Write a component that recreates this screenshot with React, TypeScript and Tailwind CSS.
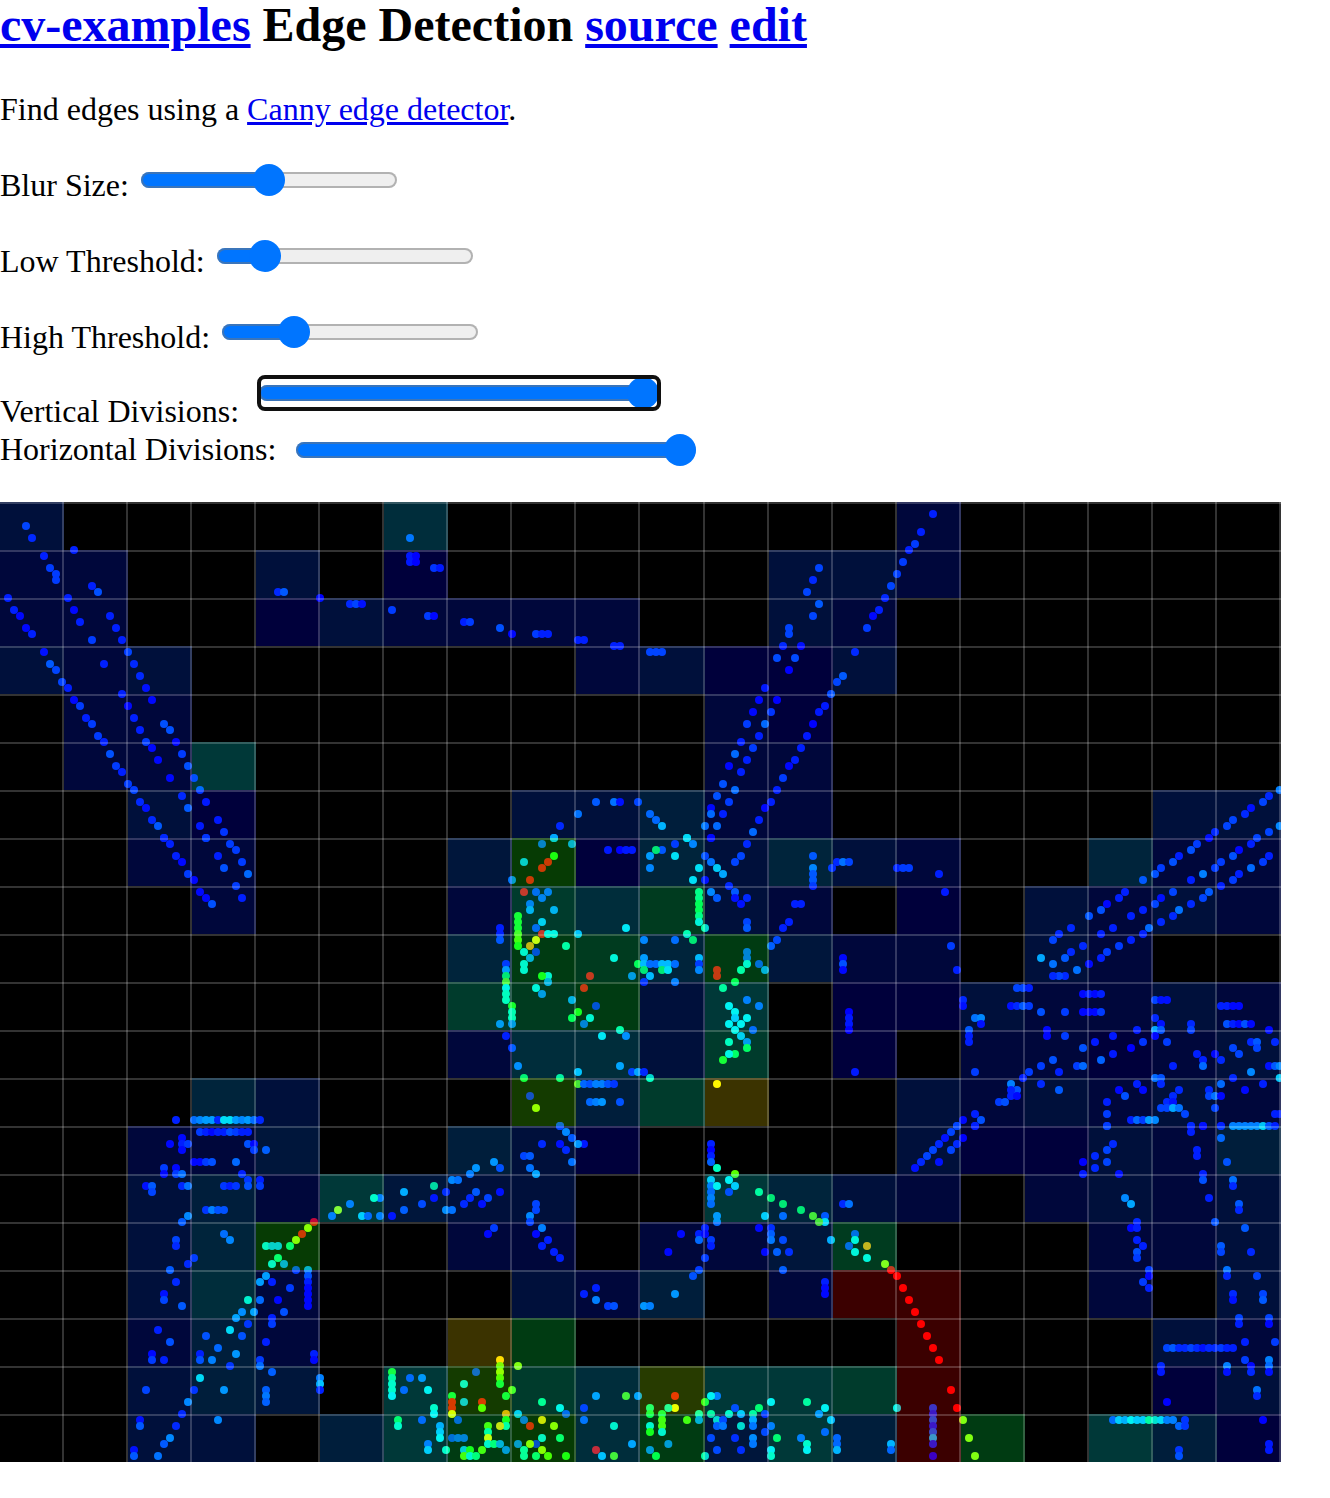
import { useState, type CSSProperties } from "react";

/* Cold-to-hot scale shared by the edge dots and the cell tints. */
const HEAT: Record<string, string> = {
  a: "#0000ff",
  b: "#0020ff",
  c: "#0044ff",
  d: "#0060ff",
  e: "#0080ff",
  f: "#009cff",
  g: "#00c4ff",
  h: "#00f4f4",
  i: "#00ffc0",
  j: "#00ff88",
  k: "#00ff4c",
  l: "#1cff10",
  m: "#58ff00",
  n: "#a8ff00",
  o: "#ffff00",
  s: "#ffdc00",
  p: "#ffa000",
  q: "#ff0000",
};

/* One letter per grid cell, 20 by 20; a dot leaves the cell untinted. */
const CELLS = [
  "c.....g.......b.....",
  "bb..c.a.....ccb.....",
  "bb..acbbbb..cb......",
  "cbc......bcaac......",
  ".bb........ba.......",
  ".bbh.......bb.......",
  "..ca....ccebb.....cc",
  "..bb...dlafcfcb..fbb",
  "...b...bigjcb.a.cbcb",
  ".......fkjfkdbb.cb..",
  ".......ijkch.aacbbcb",
  ".......bggci.a.bbabc",
  "...fc...meis..cbcbcb",
  "..bbd..eca....caacbe",
  "..cebhdcc..hfcb.bcbc",
  "..cfl..bb.bbdj...bbc",
  "..cgb...cbe.bqq..b.c",
  "..beb..sk.....q...cb",
  "..ced.hmignhhiq...ac",
  "..cc.ehklgkdheqk.hea",
];

/* Edge dots by tile; positions are in thirds of a canvas pixel from the tile's corner. */
const TILES = [
  {
    x: 0,
    y: 0,
    dots: `c78,72 b96,108 b132,162 c150,198 c168,216 c168,234 b222,144 b276,252 d294,270 b24,288 b42,324 a60,342
a78,378 b96,396 b204,288 a222,324 b240,360 b330,342 b348,378 b366,414 c276,414 b312,486 a132,450 d150,486
c168,504 c186,540 b204,558 a222,594 c240,612 b258,648 c276,666 c294,702 b312,720 d330,756 c348,792 b366,810
c384,846 c402,864 b420,900 a438,918 b456,954 d474,972 b492,1008 c384,450 b402,486 b420,522 a438,558 a456,594
b366,576 a384,612 b402,648 b420,684 c438,720 a456,738 a474,774 a510,828 b546,882 d564,918 d492,666 d510,684
a528,720 c546,756 d564,792 b582,828 c600,864 b618,900 b654,954 c672,990 b600,972 c618,1008 d1230,108
b1230,162 a1248,162 b1230,180 a1248,180 c1302,198 b1320,198 b834,270 d852,270 a960,288 b1050,306 c1068,306
a1086,306 c1176,324 c1284,342 a1302,342`,
  },
  {
    x: 448,
    y: 0,
    dots: `b48,360 c66,360 d156,378 a192,396 c264,396 b282,396 b300,396 b390,414 b408,414 b498,432 b516,432
c606,450 c624,450 c642,450 c1113,198 b1095,234 c1077,270 d1113,306 c1095,342 c1023,378 c1023,396 b1005,432
a1059,432 d987,468 d1041,468 a1023,504 b951,558 a933,594 a987,594 a915,630 c969,630 c897,666 e951,666 b933,702
b879,720 c915,738 e861,756 b897,774 a843,792 b879,810 d825,846 e861,864 d807,882 c843,900 a789,918 e789,936
b825,936 e771,972 e807,972 a789,1008 c1329,252 b1311,288 b1293,324 a1275,342 c1257,378 b1221,450 d1185,522
c1167,540 d1149,576 b1131,612 b1113,630 a1095,666 b1077,702 b1059,738 b1041,774 a1023,792 c1005,828 b987,864
b969,900 a951,918 b933,954 e915,990 d444,900 e498,900 a516,900 c570,900 e390,936 b336,972 d606,936 d624,954
g642,972 g318,1008 h717,1008`,
  },
  {
    x: 896,
    y: 0,
    dots: `b111,36 b75,90 c57,126 b39,144 c21,180 c3,216`,
  },
  {
    x: 0,
    y: 336,
    dots: `b492,0 b510,18 b528,54 a546,72 c564,108 a582,126 a600,162 a618,180 d636,198 c618,0 b654,54 d672,90
c690,18 c708,36 c726,72 e744,108 c708,144 b726,180`,
  },
  {
    x: 448,
    y: 288,
    dots: `g318,144 h717,144 a789,144 d282,162 f372,162 l318,198 g228,216 q300,216 q282,234 q246,270 e192,270
q228,306 e735,162 b681,162 c642,180 k624,180 f606,198 h681,198 e606,234 b480,180 a516,180 b534,180 b552,180
h753,234 h735,270 a771,270 c771,198 e789,216 h807,234 g825,252 b843,288 d861,306 a861,324 b897,324 a879,342
f789,306 d807,324 b897,162 c879,198 c861,216 c1095,198 e1095,234 c1095,252 c1095,270 b1095,288 b1041,342
b1059,342 b1023,396 b1005,414 c987,450 d969,468 c897,396 d897,414 j753,306 j753,324 k753,342 k753,360 j753,378
h753,396 i771,414 i717,432 k735,450 c264,306 d300,306 d282,324 d246,342 f246,360 f318,360 g282,396 c264,414
h534,414 l210,378 l210,396 l210,414 m210,432 m210,450 l210,468 b156,414 b156,432 c156,450 q282,432 h300,432
h318,432 g390,432 o264,450 p246,468 i354,468 h228,486 b264,486 f246,504 h228,522 h228,540 h300,558 l282,558
f300,576 h264,594 e282,612 h498,504 q426,558 q408,594 e552,558 f372,630 b444,648 l390,666 k372,684 h426,684
d408,702 i516,720 h462,738 e534,738 b174,522 f174,540 k174,558 m174,576 h174,594 i174,612 i174,630 l192,648
i192,666 i192,684 e192,702 e156,702 b174,738 c192,774 e210,828 k228,864 j336,864 g390,846 f516,828 b552,846
f570,846 b588,846 i606,864 e588,450 d681,450 f588,504 k570,522 g588,522 d606,522 d624,522 g642,522 g660,522
d681,522 k588,540 k642,540 h660,540 g606,558 b588,576 e681,576 g753,504 b753,522 e753,540 d897,486 d897,504
h897,522 c933,522 f951,540 i879,540 q807,540 q807,558 k861,576 j825,594 d897,630 d933,648 h843,648 h861,666
g861,684 h897,684 h843,702 h879,702 h861,720 c915,720 g879,738 e897,756 i843,756 k897,774 k861,792 h843,792
l825,810 m390,882 d408,882 c426,882 e444,882 e462,882 c480,882 b498,882 d426,936 e444,936 f462,936 c516,936
b246,918 n264,954 d336,1008 o807,882`,
  },
  {
    x: 832,
    y: 288,
    dots: `b15,216 e33,216 c51,216 b0,234 b195,234 c213,234 c231,234 b321,252 b339,306 c357,468 b375,540 a33,504
d33,522 a33,540 a51,666 b51,684 b51,702 a51,720 b69,846 e1343,0 b1311,18 c1293,36 a1257,54 b1239,72 c1203,90
c1185,108 b1149,126 a1131,144 c1095,162 d1077,180 b1041,198 d1023,216 c987,234 d969,252 c933,270 b879,306
b861,324 a825,342 d807,360 d771,378 b717,414 b681,432 c663,450 f1343,108 c1311,126 c1275,144 b1257,162
a1221,180 d1203,198 c1167,216 c1149,234 f1113,252 b1077,270 c1023,306 a987,324 c969,342 b933,360 b897,378
b843,414 b807,432 b753,468 b717,486 d699,504 e663,522 g627,504 b1311,198 c1293,216 e1257,234 b1221,252
c1203,270 b1167,288 d1131,306 c1113,324 b1077,342 e1041,360 b1023,378 b987,396 e951,414 b933,432 b897,450
c861,468 c825,486 b807,504 a771,522 e735,540 b699,558 c681,558 b663,558 c555,594 c573,594 b591,594 a537,648
b555,648 d573,648 c591,648 b393,630 a393,648 e429,684 f447,684 a447,702 d411,720 b411,738 b411,756 c429,846
d627,666 c699,666 a645,720 a645,738 c699,738 d753,774 d663,810 c627,828 c591,846 b573,864 b681,846 c735,828
e753,828 b789,756 b843,738 b843,792 e807,810 a897,774 c933,756 b915,720 a753,612 b771,612 a789,612 b807,612
a753,666 a771,666 a789,666 c807,666 c969,630 a987,630 a1005,630 b969,684 a987,702 g969,720 d987,720 b1077,702
c1077,720 a969,738 c1005,756 b1167,648 b1185,648 a1203,648 a1221,648 d1185,702 b1203,702 a1221,702 d1239,702
a1257,702 a1311,720 b1257,756 d1275,756 b1329,756 c1203,774 c1275,774 c1221,792 b1095,792 b1113,810 a1149,792
b1167,810 b1023,828 e1113,828 a1311,828 d1329,828 f1343,828 f1257,846 b1203,864 h1343,864 e969,864 d987,864
b627,882 d681,900 f537,882 d555,900 b537,900 b537,918 a555,918 c501,936 d519,936 b429,972 a393,990 d447,990
c375,1008 b429,1008 b987,882 b915,882 a861,900 a933,900 d879,918 b825,936 c825,972 b825,1008 b897,990 e915,990
c933,990 g951,990 f969,990 b1041,900 b1023,918 b1005,936 a1023,936 c987,954 c1005,954 g1023,954 e1041,954
c1059,972 e1167,882 b1131,900 c1131,918 e1149,918 a1167,918 c1149,954 a1239,900 b1293,882 b1329,972 b1343,972
b1077,1008 a1113,1008 a1167,1008`,
  },
  {
    x: 64,
    y: 576,
    dots: `b336,126 d390,126 e408,126 f426,126 f444,126 a462,126 h480,126 h498,126 f516,126 e534,126 f552,126
d570,126 b588,126 c408,162 b426,162 a444,162 b462,162 b480,162 d498,162 c516,162 b534,162 b552,162 a354,180
a318,198 b354,198 c372,198 a354,216 d552,198 a570,198 c570,216 d606,216 a390,252 a408,252 c426,252 d444,252
e516,252 c300,270 a336,270 a300,288 c336,288 e354,288 b534,288 b552,306 b588,306 a246,324 d264,324 b354,324
e372,324 b480,324 a498,324 b516,324 c552,324 c588,324 c264,342 b426,396 e444,396 c462,396 c480,396 f372,414
d354,432 c336,486 b336,504 d480,468 e498,486 b390,540 b372,558 d318,576 b336,612 a300,648 c300,666 d354,684
b282,756 d318,792 a264,828 c264,846 b300,846 d804,414 n822,396 d858,378 d948,360 i930,360 g894,414 c912,414
d948,414 a984,414 d1020,396 g1020,342 c1074,378 a1110,360 j1110,324 q750,432 n732,450 q714,468 n696,486
j678,504 h606,504 g624,504 g642,504 j642,540 h624,558 f660,558 c696,576 f732,576 d732,594 b732,612 a732,630
a732,648 a732,666 a732,684 g606,594 g588,612 b624,612 c678,630 i552,666 e588,666 a642,666 e534,702 f570,702
d660,702 f516,720 b624,720 c624,738 b552,738 h498,756 c426,774 c534,774 d462,810 b606,792 a408,828 c408,846
e444,846 f516,828 b498,864 c588,846 e588,864 b750,828 a750,846 h408,900 d624,882 b390,936 f480,936 f372,972
b354,1008 c246,936 d606,936 e606,954 d606,972 e768,900 g768,918 b768,936 a228,1026 d228,1044 f462,1026
b336,1044 f318,1080 d300,1098 a210,1116 d210,1134 e282,1134`,
  },
  {
    x: 384,
    y: 624,
    dots: `c528,0 f546,18 d564,36 b600,54 g582,54 b474,54 a528,54 b546,72 c420,90 d438,90 e564,108 e438,126
g456,144 f330,108 f276,126 e258,144 c348,126 f204,162 e222,162 d276,198 a348,198 b186,198 b258,216 c312,216
b240,234 a294,234 f186,252 e204,252 c456,234 c456,252 f438,270 c438,288 f474,306 a456,324 b492,342 b474,360
b510,378 b528,396 a312,324 c330,306 b600,504 b636,486 f636,522 c672,540 d690,540 s348,702 m348,720 n348,738
m348,756 k348,774 n402,720 c276,738 h240,774 g240,828 k204,810 q204,828 q204,846 o204,864 q294,828 m294,846
k366,810 m384,792 p366,864 c222,882 l366,882 i366,900 s348,900 m312,900 i312,918 o312,936 h312,954 c204,936
d222,936 d240,936 j330,954 f348,954 e366,972 g240,972 l258,972 m294,972 m240,990 h258,990 j276,990 l24,738
j24,756 i24,774 i24,792 h24,810 c78,756 e114,756 c60,792 h132,792 i150,846 h150,864 k42,882 i42,900 c114,882
f168,900 g168,918 h168,936 d132,954 g132,972 i186,972 g402,864 d420,882 s474,882 q438,900 n510,900 j474,828
h528,846 c546,864 h474,936 j528,936 e402,954 b456,954 n438,954 n474,972 i420,972 i420,990 j456,990 m492,990
l546,990 f636,810 m726,810 f762,810 b600,846 d600,882 i690,900 q636,972 f744,954 g654,990 m690,990 q873,810
o873,846 i853,846 j798,846 k798,864 h798,900 l798,918 k834,864 m834,882 m834,900 h834,918 m909,882 e853,954
e798,972 k816,990`,
  },
  {
    x: 640,
    y: 624,
    dots: `b213,54 a213,72 b213,90 d213,108 i231,126 m285,144 h267,162 g213,162 d213,180 h231,180 g285,180
c213,198 d213,216 c213,234 b267,198 e231,270 e231,288 j357,198 k393,216 k429,234 k483,252 m519,270 c555,270
h555,288 m537,288 g375,270 d429,270 b195,306 b177,324 a195,324 e177,342 c213,342 b213,360 c195,396 c177,432
c159,450 a123,324 a85,378 f105,504 f12,540 e30,540 a357,306 b393,306 d393,324 e393,342 c429,342 a375,378
d411,378 b447,378 d429,432 g573,342 b609,234 e627,234 c645,324 h645,342 c627,360 p681,360 h645,378 h681,396
n735,414 q753,432 q771,450 q789,486 q807,522 q825,558 q843,594 q861,630 q879,666 q897,702 q933,792 q951,846
b555,468 a555,486 a555,504 l195,828 d231,810 h213,810 i177,864 f177,882 j213,864 i231,882 c249,882 b285,846
i267,864 g303,864 i303,900 k357,846 j339,864 b375,864 g339,882 e339,900 d231,900 e249,900 c375,918 d393,900
c213,936 b285,936 f339,936 e339,954 k411,936 c231,972 b303,972 h393,972 i393,990 i195,990 h393,828 j501,828
h555,846 e537,864 g573,882 c555,918 d483,936 i501,954 h501,972 d591,936 d591,954 g591,972 g753,954 d753,972
h771,846 c879,846 b879,864 d879,882 b879,900 d879,918 g879,936 b879,954 a879,990`,
  },
  {
    x: 896,
    y: 624,
    dots: `c183,0 b237,0 c165,18 a147,36 a201,36 b129,54 b183,54 c111,72 c165,72 c93,90 b75,108 a57,126 a129,108
c633,0 b651,54 c633,72 b597,90 a561,108 c633,108 b597,126 b561,144 a669,144 f687,216 g705,234 b723,288
a705,306 b723,306 b723,342 b741,360 d723,378 c723,396 c759,432 a759,450 c741,468 b759,486 b885,0 b885,18
a921,0 b903,72 b903,90 b921,144 d921,162 b939,216 d957,288 b975,0 d975,36 c993,108 e1011,162 b1011,180
d1029,234 b1029,252 d1047,306 d975,360 c975,378 b1065,378 e993,432 b993,450 c1083,450 b1011,504 a1011,522
c1101,504 d1101,522 c1029,576 b1029,594 c1119,576 a1119,594 b1047,648 c1137,648 c1047,702 f1119,702 e1119,720
a1119,738 a1065,720 b1065,738 f993,720 a993,738 c813,666 d831,666 b849,666 b867,666 c885,666 b903,666 a921,666
b939,666 b957,666 c975,666 b993,666 b1011,666 b795,720 b795,738 a813,828 e1083,792 b1083,810 a1101,882
b1119,954 b1119,972 n201,882 n219,936 n237,990 c651,882 g669,882 f687,882 h705,882 g723,882 g741,882 j759,882
i777,882 h795,882 e813,882 e831,882 b867,882 d849,900 b867,900 b849,972 c849,990 f1011,0 f1029,0 f1047,0
f1065,0 f1083,0 h1101,0 d1119,0 b1137,0`,
  },
];

const INDEXES = Array.from({ length: 20 }, (_, n) => n);

/* The right part of the grid starts one pixel further along. */
const columnX = (col: number) => col * 64 + (col > 10 ? 1 : 0);

function EdgeMap() {
  return (
    <svg
      role="img"
      aria-label="Detected edges"
      viewBox="0 0 1281 960"
      className="block w-[1281px] max-w-full bg-black"
    >
      {TILES.map((tile) => (
        <g
          key={`${tile.x}-${tile.y}`}
          transform={`translate(${tile.x} ${tile.y}) scale(${1 / 3})`}
        >
          {tile.dots.split(/\s+/).map((dot) => {
            const [x, y] = dot.slice(1).split(",").map(Number);
            return <circle key={dot} cx={x} cy={y} r={12} fill={HEAT[dot[0]]} />;
          })}
        </g>
      ))}
      {CELLS.flatMap((line, row) =>
        line.split("").map((letter, col) =>
          letter === "." ? null : (
            <rect
              key={`${row}-${col}`}
              x={columnX(col)}
              y={row * 48}
              width={columnX(col + 1) - columnX(col)}
              height={48}
              fill={HEAT[letter]}
              fillOpacity={0.23}
            />
          ),
        ),
      )}
      <g fill="#ffffff" fillOpacity={0.2}>
        {INDEXES.map((n) => (
          <rect key={`h${n}`} x={0} y={n * 48} width={1281} height={2} />
        ))}
        {INDEXES.map((n) => (
          <rect key={`v${n}`} x={columnX(n + 1) - 2} y={0} width={2} height={960} />
        ))}
      </g>
    </svg>
  );
}

type SliderProps = {
  id: string;
  label: string;
  initial: number;
  max: number;
  row: string;
  size: string;
};

function Slider({ id, label, initial, max, row, size }: SliderProps) {
  const [value, setValue] = useState(initial);
  const share = value / max;
  const style = {
    "--fill": `calc(16px + (100% - 32px) * ${share})`,
  } as CSSProperties;

  return (
    <div className={`flex items-start ${row}`}>
      <label htmlFor={id} className="self-end whitespace-nowrap">
        {label}
      </label>
      <input
        id={id}
        type="range"
        min={0}
        max={max}
        value={value}
        onChange={(event) => setValue(Number(event.target.value))}
        style={style}
        className={`h-8 shrink-0 cursor-default appearance-none bg-transparent [&::-webkit-slider-runnable-track]:h-4 [&::-webkit-slider-runnable-track]:rounded-full [&::-webkit-slider-runnable-track]:bg-[linear-gradient(to_right,#0075ff_var(--fill),#efefef_var(--fill))] [&::-webkit-slider-runnable-track]:shadow-[inset_0_0_0_2px_rgba(118,118,118,0.5)] [&::-webkit-slider-thumb]:-mt-2 [&::-webkit-slider-thumb]:size-8 [&::-webkit-slider-thumb]:appearance-none [&::-webkit-slider-thumb]:rounded-full [&::-webkit-slider-thumb]:bg-[#0075ff] ${size}`}
      />
    </div>
  );
}

const LINK = "text-[#0000ee] underline";

export default function App() {
  return (
    <main className="min-h-screen bg-white font-['Liberation_Serif',serif] text-[32px] leading-[38px] text-black">
      <h1 className="text-[48px] leading-[50px] font-bold">
        <a href="#examples" className={LINK}>
          cv-examples
        </a>{" "}
        Edge Detection{" "}
        <a href="#source" className={LINK}>
          source
        </a>{" "}
        <a href="#edit" className={LINK}>
          edit
        </a>
      </h1>
      <p className="mt-10">
        Find edges using a{" "}
        <a href="#canny" className={LINK}>
          Canny edge detector
        </a>
        .
      </p>
      <div className="mt-[38px] flex flex-col gap-[38px]">
        <Slider id="blur" label="Blur Size:" initial={50} max={100} row="gap-3" size="-mt-0.5 w-64" />
        <Slider id="low" label="Low Threshold:" initial={37} max={255} row="gap-3" size="-mt-0.5 w-64" />
        <Slider id="high" label="High Threshold:" initial={64} max={255} row="gap-3" size="-mt-0.5 w-64" />
      </div>
      <div className="mt-5">
        <Slider
          id="vertical"
          label="Vertical Divisions:"
          initial={20}
          max={20}
          row="h-[54px] gap-5"
          size="mt-px w-[400px] rounded-md outline-4 -outline-offset-2 outline-[#101010]"
        />
        <Slider id="horizontal" label="Horizontal Divisions:" initial={20} max={20} row="gap-5" size="mt-1 w-[400px]" />
      </div>
      <div className="mt-[34px]">
        <EdgeMap />
      </div>
    </main>
  );
}
